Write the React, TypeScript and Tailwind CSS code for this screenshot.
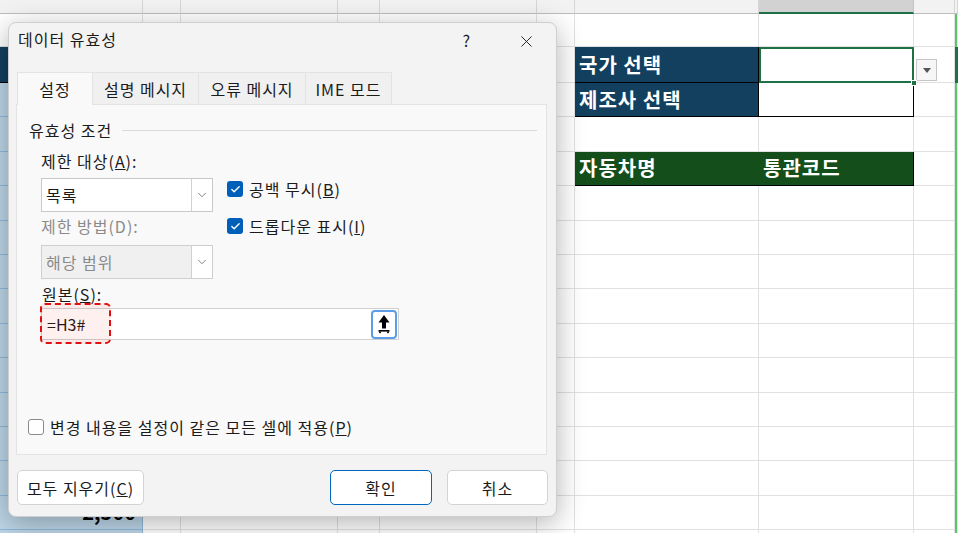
import { Check, ChevronDown, X } from "lucide-react";

const COLS = [143, 38, 157, 42, 157, 38, 184, 155, 41, 3];
const ROWS = [33, 36, 34.4, 34.4, 34.4, 34.4, 34.4, 34.4, 34.4, 34.4, 34.4, 34.4, 34.4, 34.4, 34.4, 34.4];

function cellClass(r: number, c: number) {
  if (c === 0) {
    if (r === 0) return "bg-white border-r border-b border-[#e1e1e1]";
    if (r === 1) return "bg-[#12405e] border-r border-b border-black";
    return "bg-[#bdd6e8] border-r border-b border-[#8fb8d8]";
  }
  if (c === 6) {
    if (r === 1 || r === 2) return "bg-[#12405e] border-r border-b border-black text-white";
    if (r === 4) return "bg-[#134e1b] border-b border-black text-white";
  }
  if (c === 7) {
    if (r === 1) return "bg-white border-2 border-[#1e7145]";
    if (r === 2) return "bg-white border-r border-b border-black";
    if (r === 4) return "bg-[#134e1b] border-r border-b border-black text-white";
  }
  if (c === 9) {
    if (r === 1) return "bg-[#1e7145] border-l-2 border-[#1e7145]";
    return "bg-[#d6f2da] border-l-2 border-[#5cc46a]";
  }
  return "bg-white border-r border-b border-[#e1e1e1]";
}

function cellText(r: number, c: number) {
  if (c === 6 && r === 1) return "국가 선택";
  if (c === 6 && r === 2) return "제조사 선택";
  if (c === 6 && r === 4) return "자동차명";
  if (c === 7 && r === 4) return "통관코드";
  return "";
}

function Sheet() {
  return (
    <div className="flex flex-col">
      <div className="flex h-[14px]">
        {COLS.map((w, c) => (
          <div
            key={c}
            style={{ width: w }}
            className={
              c === 7
                ? "h-full bg-[#d2d2d2] border-r border-[#c4c4c4] border-b-2 border-b-[#1e7145]"
                : "h-full bg-[#f2f2f2] border-r border-[#d6d6d6] border-b border-b-[#bdbdbd]"
            }
          />
        ))}
      </div>
      {ROWS.map((h, r) => (
        <div key={r} className="flex" style={{ height: h }}>
          {COLS.map((w, c) => (
            <div
              key={c}
              style={{ width: w }}
              className={`relative h-full shrink-0 flex items-center ${cellClass(r, c)}`}
            >
              {cellText(r, c) && (
                <span className="pl-[4px] text-[20px] font-bold leading-none tracking-[1px] whitespace-nowrap">
                  {cellText(r, c)}
                </span>
              )}
              {c === 0 && r === 14 && (
                <span className="ml-auto pr-[6px] text-[20px] font-bold leading-none text-black">2,500</span>
              )}
            </div>
          ))}
        </div>
      ))}
      <div className="absolute left-[916px] top-[59px] w-[21px] h-[22px] bg-[#f6f6f6] border border-[#c6c6c6] flex items-center justify-center">
        <div className="w-0 h-0 border-l-[4px] border-r-[4px] border-t-[5px] border-l-transparent border-r-transparent border-t-[#555]" />
      </div>
      <div className="absolute left-[911px] top-[80px] w-[6px] h-[6px] bg-[#1e7145] border border-white" />
    </div>
  );
}

function Checkbox({ checked, label }: { checked: boolean; label: React.ReactNode }) {
  return (
    <div className="flex items-center gap-[6px]">
      {checked ? (
        <div className="w-[16px] h-[16px] rounded-[3px] bg-[#005fb8] flex items-center justify-center">
          <Check size={11} strokeWidth={3} color="white" />
        </div>
      ) : (
        <div className="w-[16px] h-[16px] rounded-[3px] bg-white border border-[#8a8a8a]" />
      )}
      <span className="text-[16px] tracking-[1px] text-[#1b1b1b] leading-none">{label}</span>
    </div>
  );
}

function Select({ value, disabled }: { value: string; disabled?: boolean }) {
  return (
    <div
      className={`flex h-[34px] w-[172px] border ${
        disabled ? "bg-[#f0f0f0] border-[#cfcfcf]" : "bg-white border-[#c9c9c9]"
      }`}
    >
      <div
        className={`flex-1 flex items-center pl-[4px] text-[16px] tracking-[1px] ${
          disabled ? "text-[#8a8a8a]" : "text-[#1b1b1b]"
        }`}
      >
        {value}
      </div>
      <div className="w-[21px] border-l border-[#d0d0d0] bg-white flex items-center justify-center">
        <ChevronDown size={14} strokeWidth={1.4} color="#6a6a6a" />
      </div>
    </div>
  );
}

function UploadIcon() {
  return (
    <svg width="14" height="20" viewBox="0 0 14 20">
      <path d="M7 1 L1.5 8.5 L5 8.5 L5 14.5 L9 14.5 L9 8.5 L12.5 8.5 Z" fill="#000" />
      <rect x="1.5" y="16" width="11" height="1.6" fill="#000" />
      <circle cx="3" cy="18.3" r="1" fill="#000" />
      <circle cx="11" cy="18.3" r="1" fill="#000" />
    </svg>
  );
}

function Dialog() {
  const tabs = [
    { label: "설정", w: 76, active: true },
    { label: "설명 메시지", w: 106 },
    { label: "오류 메시지", w: 107 },
    { label: "IME 모드", w: 86 },
  ];
  return (
    <div className="absolute left-[8px] top-[22px] w-[549px] h-[495px] rounded-[8px] bg-[#f3f3f3] border border-[#cfcfcf] shadow-[0_6px_28px_rgba(0,0,0,0.3)] flex flex-col tracking-[1px]">
      <div className="h-[49px] flex items-start pt-[3px]">
        <span className="pl-[9px] pt-[1px] text-[16px] text-[#1b1b1b]">데이터 유효성</span>
        <span className="ml-auto mr-[46px] pt-[2px] text-[16px] text-[#1b1b1b]">?</span>
        <div className="mr-[20px] pt-[6px]">
          <X size={19} strokeWidth={1.2} color="#1b1b1b" />
        </div>
      </div>
      <div className="flex pl-[8px] h-[32px]">
        {tabs.map((t) => (
          <div
            key={t.label}
            style={{ width: t.w }}
            className={`flex items-center justify-center text-[16px] text-[#1b1b1b] border-t border-r border-[#e3e3e3] ${
              t.active ? "bg-[#f9f9f9] border-l relative z-10 h-[33px]" : "bg-[#f0f0f0]"
            }`}
          >
            {t.label}
          </div>
        ))}
      </div>
      <div className="ml-[7px] w-[531px] h-[351px] bg-[#f9f9f9] border border-[#e3e3e3] flex flex-col">
        <div className="flex items-center pl-[12px] pt-[17px] pr-[9px]">
          <span className="text-[16px] text-[#1b1b1b] leading-none">유효성 조건</span>
          <div className="flex-1 ml-[10px] h-px bg-[#dadada]" />
        </div>
        <div className="flex pl-[24px] pt-[15px]">
          <div className="flex flex-col">
            <span className="text-[16px] text-[#1b1b1b] leading-none">
              제한 대상(<u>A</u>):
            </span>
            <div className="mt-[9px]">
              <Select value="목록" />
            </div>
            <span className="mt-[6px] text-[16px] text-[#8a8a8a] leading-none">제한 방법(D):</span>
            <div className="mt-[11px]">
              <Select value="해당 범위" disabled />
            </div>
          </div>
          <div className="flex flex-col gap-[21px] pl-[14px] pt-[28px]">
            <Checkbox checked label={<>공백 무시(<u>B</u>)</>} />
            <Checkbox checked label={<>드롭다운 표시(<u>I</u>)</>} />
          </div>
        </div>
        <span className="pl-[25px] mt-[7px] text-[16px] text-[#1b1b1b] leading-none">
          원본(<u>S</u>):
        </span>
        <div className="ml-[24px] mt-[6px] relative w-[358px] h-[32px] bg-white border border-[#d0d0d0] flex items-center">
          <span className="pl-[5px] text-[16px] tracking-normal text-[#1b1b1b]">=H3#</span>
          <div className="ml-auto mr-[1px] w-[26px] h-[29px] rounded-[4px] border-2 border-[#5b9de6] bg-white flex items-center justify-center">
            <UploadIcon />
          </div>
          <div className="absolute left-[-2px] top-[-6px] w-[71px] h-[41px] rounded-[5px] border-2 border-dashed border-[#e01010] bg-[rgba(255,0,0,0.06)]" />
        </div>
        <div className="flex-1" />
        <div className="pl-[11px] pb-[19px]">
          <Checkbox checked={false} label={<>변경 내용을 설정이 같은 모든 셀에 적용(<u>P</u>)</>} />
        </div>
      </div>
      <div className="flex pl-[8px] pt-[15px]">
        <button className="w-[127px] h-[35px] rounded-[5px] bg-white border border-[#d3d3d3] text-[16px] text-[#1b1b1b]">
          모두 지우기(<u>C</u>)
        </button>
        <button className="ml-[186px] w-[102px] h-[35px] rounded-[5px] bg-white border border-[#0067c0] text-[16px] text-[#1b1b1b]">
          확인
        </button>
        <button className="ml-[15px] w-[101px] h-[35px] rounded-[5px] bg-white border border-[#d3d3d3] text-[16px] text-[#1b1b1b]">
          취소
        </button>
      </div>
    </div>
  );
}

export default function App() {
  return (
    <div className="relative w-[958px] h-[533px] overflow-hidden bg-white font-['Noto_Sans_CJK_KR',sans-serif]">
      <Sheet />
      <Dialog />
    </div>
  );
}
